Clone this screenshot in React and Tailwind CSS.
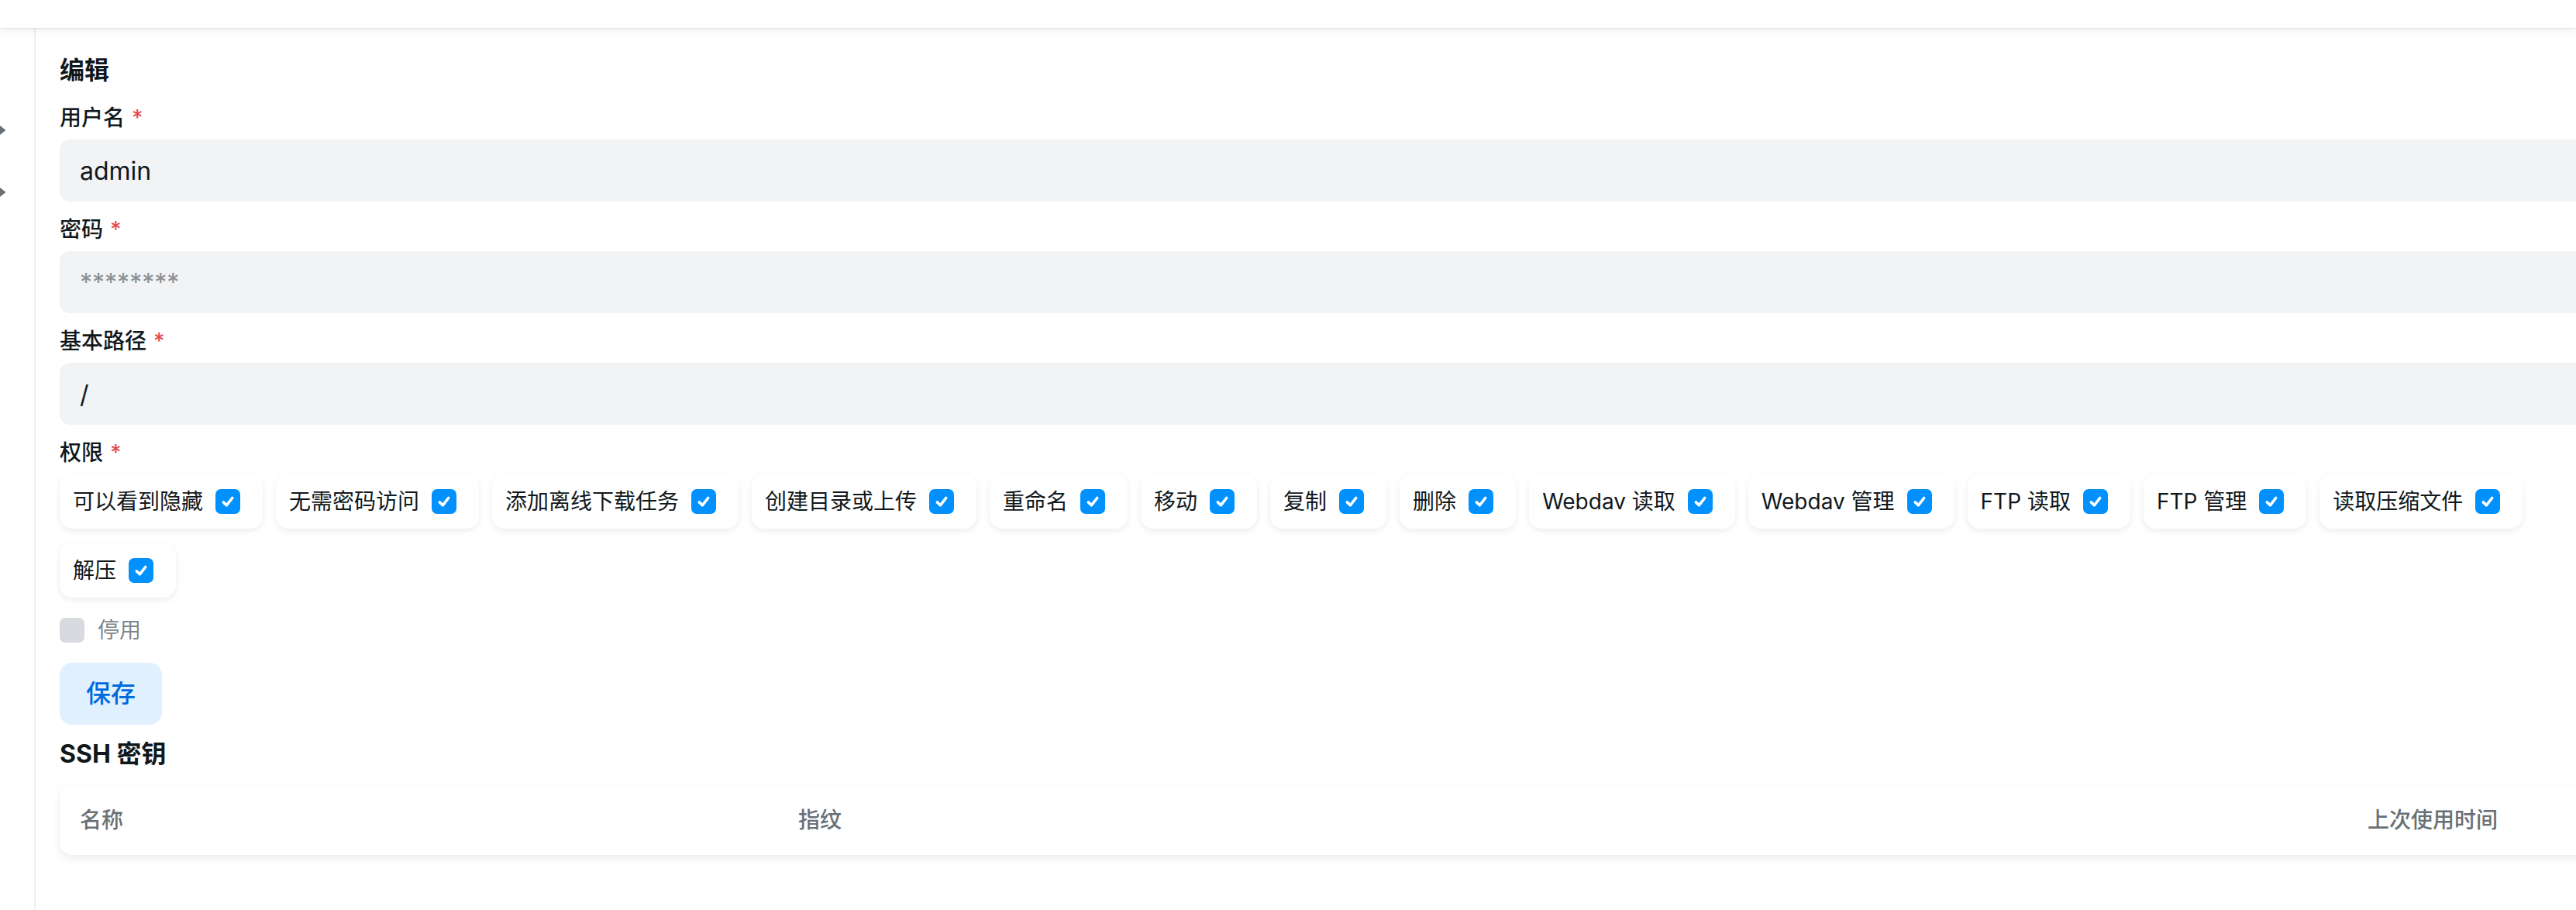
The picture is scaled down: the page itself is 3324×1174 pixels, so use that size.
import React from "react";

const FONT = { fontFamily: 'Inter, "Noto Sans CJK SC", "Noto Sans", sans-serif' };

const perms = [
  "可以看到隐藏",
  "无需密码访问",
  "添加离线下载任务",
  "创建目录或上传",
  "重命名",
  "移动",
  "复制",
  "删除",
  "Webdav 读取",
  "Webdav 管理",
  "FTP 读取",
  "FTP 管理",
  "读取压缩文件",
  "解压",
];

function Check() {
  return (
    <span className="flex h-[32px] w-[32px] shrink-0 items-center justify-center rounded-[7px] bg-[#0091ff]">
      <svg width="24" height="24" viewBox="0 0 16 16" fill="none">
        <path d="M4.2 8.6 L6.9 11.2 L11.8 5" stroke="#fff" strokeWidth="2.4" strokeLinecap="round" strokeLinejoin="round" />
      </svg>
    </span>
  );
}

function Label({ children }) {
  return (
    <div className="flex items-center text-[28px] leading-[40px] font-medium text-[#11181c]">
      <span>{children}</span>
      <span className="ml-[9px] text-[#e5484d]">*</span>
    </div>
  );
}

function Field({ label, children, first }) {
  return (
    <div className={first ? "mt-[21px]" : "mt-[16px]"}>
      <Label>{label}</Label>
      <div className="mt-[8px]">{children}</div>
    </div>
  );
}

const inputCls =
  "block w-full h-[80px] rounded-[13px] bg-[#f1f3f5] pl-[26px] text-[32px] text-[#11181c] outline-none placeholder:text-[#889096]";

export default function App() {
  return (
    <div className="flex h-[1174px] w-[3324px] flex-col overflow-hidden bg-white" style={FONT}>
      <header className="relative z-10 h-[36px] shrink-0 bg-white shadow-[0_1px_2px_rgba(0,0,0,0.10),0_4px_14px_rgba(0,0,0,0.06)]" />
      <div className="flex flex-1">
        <aside className="flex w-[46px] shrink-0 flex-col gap-[68px] border-r-2 border-[#eef0f2] pt-[126px]">
          <svg width="8" height="12" viewBox="0 0 8 12">
            <polygon points="0,0 7.5,6 0,12" fill="#687076" />
          </svg>
          <svg width="8" height="12" viewBox="0 0 8 12">
            <polygon points="0,0 7.5,6 0,12" fill="#687076" />
          </svg>
        </aside>
        <main className="w-[3300px] shrink-0 pl-[31px] pt-[35px]">
          <h2 className="text-[32px] leading-[40px] font-bold text-[#11181c]">编辑</h2>

          <Field label="用户名" first>
            <input className={inputCls} defaultValue="admin" readOnly />
          </Field>
          <Field label="密码">
            <input className={inputCls} placeholder="********" readOnly />
          </Field>
          <Field label="基本路径">
            <input className={inputCls} defaultValue="/" readOnly />
          </Field>
          <Field label="权限">
            <div className="flex flex-wrap gap-x-[17px] gap-y-[19px]">
              {perms.map((p) => (
                <div
                  key={p}
                  className="flex h-[70px] items-center gap-[16px] rounded-[16px] bg-white pl-[17px] pr-[29px] shadow-[0_3px_9px_rgba(0,0,0,0.08)]"
                >
                  <span className="text-[28px] leading-[40px] text-[#11181c] whitespace-nowrap">{p}</span>
                  <Check />
                </div>
              ))}
            </div>
          </Field>

          <div className="mt-[22px] flex items-center gap-[17px]">
            <span className="h-[32px] w-[32px] rounded-[7px] bg-[#d7dbdf]" />
            <span className="text-[28px] leading-[40px] text-[#7e868c]">停用</span>
          </div>

          <button className="mt-[22px] flex h-[80px] w-[132px] items-center justify-center rounded-[16px] bg-[#e1f0ff] text-[32px] font-medium text-[#006adc]">
            保存
          </button>

          <h2 className="mt-[18px] text-[32px] leading-[40px] font-bold text-[#11181c]">SSH 密钥</h2>

          <div className="mt-[20px] grid h-[90px] grid-cols-[927px_2025px_1fr] items-center rounded-[16px] bg-white px-[26px] shadow-[0_4px_12px_rgba(0,0,0,0.08)]">
            <span className="text-[28px] font-medium text-[#687076]">名称</span>
            <span className="text-[28px] font-medium text-[#687076]">指纹</span>
            <span className="text-[28px] font-medium text-[#687076]">上次使用时间</span>
          </div>
        </main>
      </div>
    </div>
  );
}
